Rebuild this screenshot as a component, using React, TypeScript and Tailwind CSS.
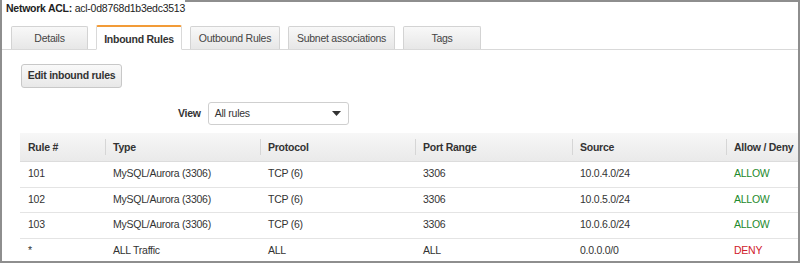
import React from 'react'

const tabs = [
  { label: 'Details', w: 'w-[77px]' },
  { label: 'Inbound Rules', w: 'w-[86px]', active: true },
  { label: 'Outbound Rules', w: 'w-[90px]' },
  { label: 'Subnet associations', w: 'w-[107px]' },
  { label: 'Tags', w: 'w-[78px]' },
]

const rows = [
  { rule: '101', type: 'MySQL/Aurora (3306)', proto: 'TCP (6)', port: '3306', src: '10.0.4.0/24', allow: true },
  { rule: '102', type: 'MySQL/Aurora (3306)', proto: 'TCP (6)', port: '3306', src: '10.0.5.0/24', allow: true },
  { rule: '103', type: 'MySQL/Aurora (3306)', proto: 'TCP (6)', port: '3306', src: '10.0.6.0/24', allow: true },
  { rule: '*', type: 'ALL Traffic', proto: 'ALL', port: 'ALL', src: '0.0.0.0/0', allow: false },
]

const heads = ['Rule #', 'Type', 'Protocol', 'Port Range', 'Source', 'Allow / Deny']

// anchos de columna medidos
const cols = 'grid grid-cols-[85px_155px_155px_157px_154px_1fr]'

export default function App() {
  return (
    <div className="w-[800px] h-[263px] bg-white text-[10.5px] tracking-[-0.25px] text-[#333] overflow-hidden whitespace-nowrap" style={{ fontFamily: '"Liberation Sans", Arial, sans-serif' }}>
      <div className="h-full flex flex-col border-x-2 border-b-2 border-[#8e8e8e]">
        {/* título */}
        <div className="flex items-start h-[26px] shrink-0">
          <div className="pl-[4px] pt-[2px] leading-[12px] text-[#222]">
            <span className="font-bold">Network ACL:</span> acl-0d8768d1b3edc3513
          </div>
          <div className="flex-1 border-t-2 border-[#8e8e8e]" />
        </div>

        {/* tabs */}
        <div className="flex items-end gap-[8px] pl-[9px] border-b border-[#d9d9d9] h-[24px] shrink-0">
          {tabs.map(t =>
            t.active ? (
              <div key={t.label} className={`${t.w} h-[25px] -mb-px shrink-0 bg-white border border-[#d9d9d9] border-b-white border-t-2 border-t-[#f29b38] rounded-t-[2px] flex items-center justify-center font-bold text-[#333] pt-[3px]`}>
                {t.label}
              </div>
            ) : (
              <div key={t.label} className={`${t.w} h-[23px] shrink-0 bg-gradient-to-b from-[#f8f8f8] to-[#e7e7e7] border border-[#d3d3d3] border-b-0 rounded-t-[2px] flex items-center justify-center text-[#444] pt-px`}>
                {t.label}
              </div>
            )
          )}
        </div>

        {/* botón */}
        <div className="pl-[19px] pt-[14px] shrink-0">
          <button className="h-[24px] w-[101px] rounded-[3px] border border-[#c8c8c8] bg-gradient-to-b from-[#f9f9f9] to-[#e8e8e8] font-bold text-[#333] tracking-[-0.25px]">
            Edit inbound rules
          </button>
        </div>

        {/* filtro */}
        <div className="flex items-center pl-[176px] pt-[14px] gap-[7px] shrink-0">
          <span className="font-bold text-[#333]">View</span>
          <div className="w-[141px] h-[23px] border border-[#cfcfcf] rounded-[3px] flex items-center justify-between pl-[6px] pr-[7px]">
            <span>All rules</span>
            <svg width="9" height="5" viewBox="0 0 9 5"><path d="M0 0h9L4.5 5z" fill="#333" /></svg>
          </div>
        </div>

        {/* tabla */}
        <div className="ml-[18px] mt-[8px] shrink-0">
          <div className={`${cols} h-[29px] bg-gradient-to-b from-[#f7f7f7] to-[#eaeaea] border-b border-[#dcdcdc]`}>
            {heads.map((h, i) => (
              <div key={h} className="flex items-center font-bold text-[#333] relative pl-[8px] pt-px">
                {i > 0 && <span className="absolute left-0 top-[6px] bottom-[6px] w-px bg-[#d6d6d6]" />}
                {h}
              </div>
            ))}
          </div>
          {rows.map((r, i) => (
            <div key={i} className={`${cols} h-[25.5px] items-center ${i < rows.length - 1 ? 'border-b border-[#e4e4e4]' : ''}`}>
              <div className="pl-[8px]">{r.rule}</div>
              <div className="pl-[8px]">{r.type}</div>
              <div className="pl-[8px]">{r.proto}</div>
              <div className="pl-[8px]">{r.port}</div>
              <div className="pl-[8px]">{r.src}</div>
              <div className={`pl-[8px] ${r.allow ? 'text-[#1d8a2c]' : 'text-[#d0202a]'}`}>{r.allow ? 'ALLOW' : 'DENY'}</div>
            </div>
          ))}
        </div>
      </div>
    </div>
  )
}
